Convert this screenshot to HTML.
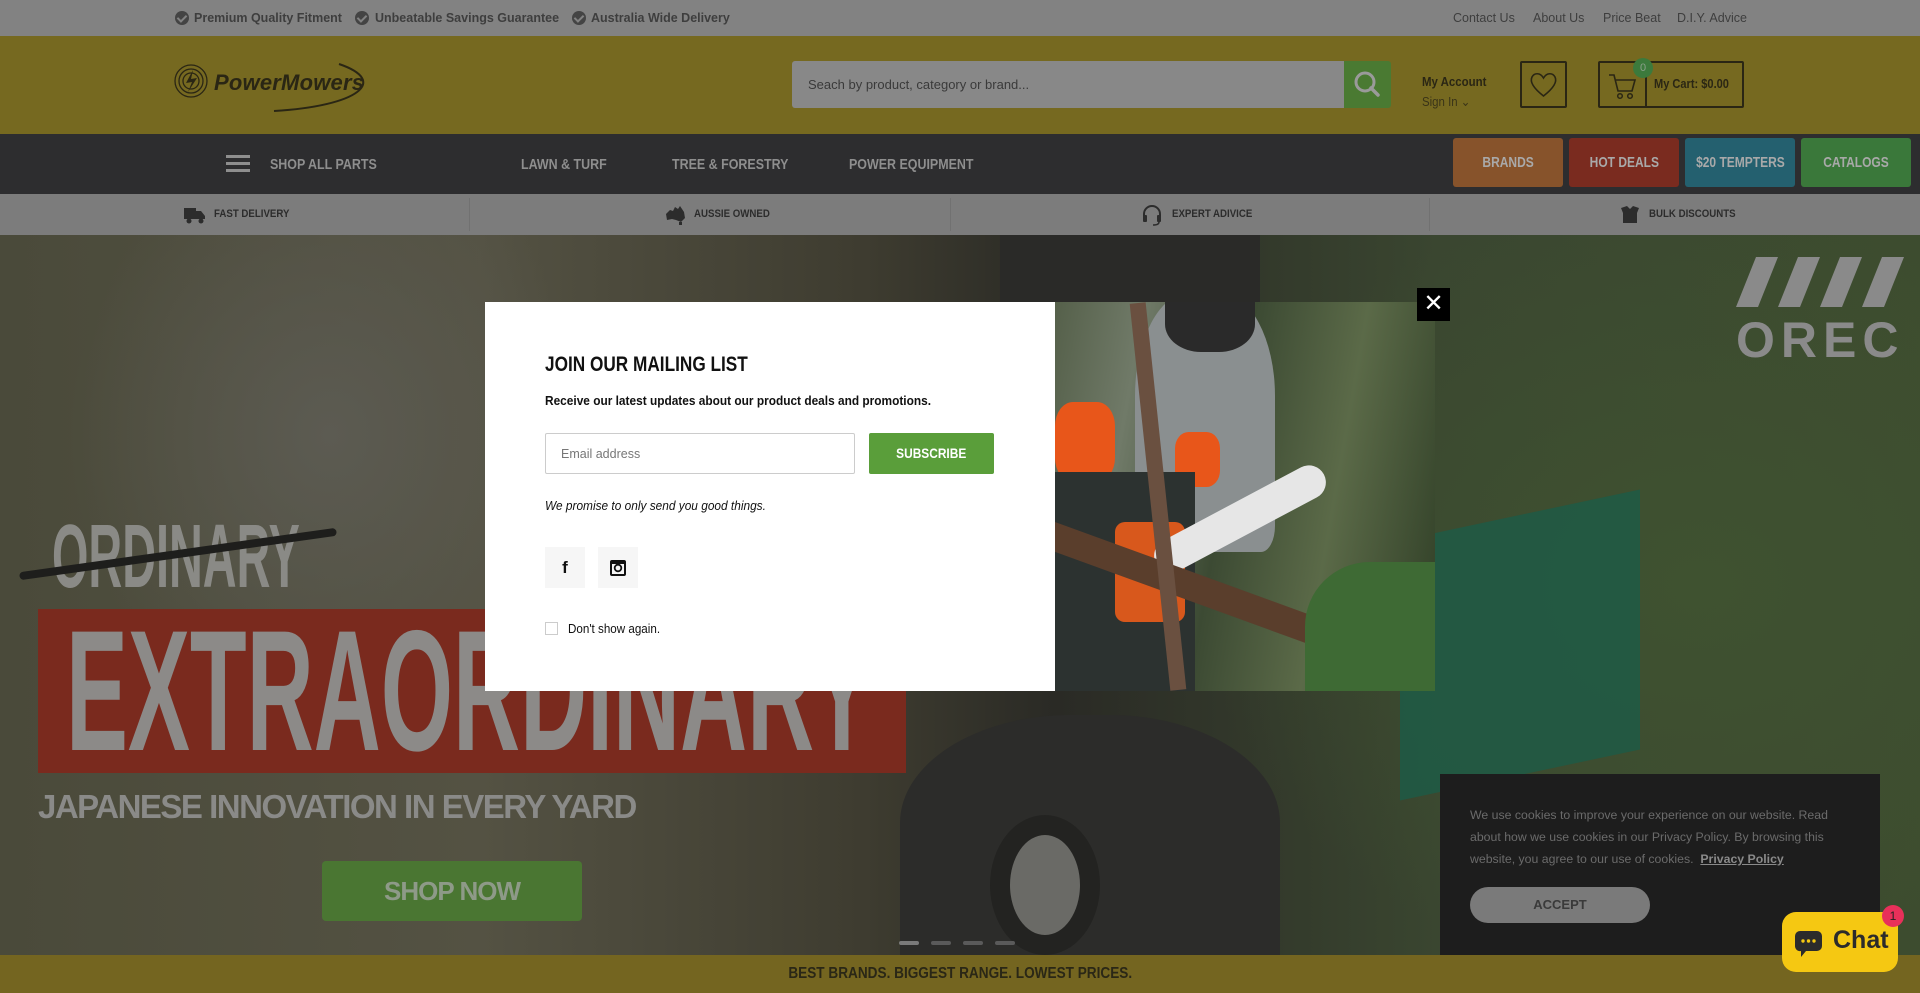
<!DOCTYPE html>
<html><head><meta charset="utf-8">
<style>
*{margin:0;padding:0;box-sizing:border-box}
body{width:1920px;height:993px;overflow:hidden;position:relative;font-family:"Liberation Sans",sans-serif;background:#3b3a2c}
.abs{position:absolute}
.c{transform-origin:left center;white-space:nowrap}
#top{left:0;top:0;width:1920px;height:36px;background:#828282;color:#3e3e3e;font-size:12.5px}
#top span{position:absolute;top:11px;white-space:nowrap}
.chk{position:absolute;top:11px;width:14px;height:14px;border-radius:50%;background:#444}
.chk:after{content:"";position:absolute;left:4px;top:2px;width:4px;height:7px;border:solid #828282;border-width:0 2px 2px 0;transform:rotate(45deg)}
#hdr{left:0;top:36px;width:1920px;height:98px;background:#766920}
#nav{left:0;top:134px;width:1920px;height:60px;background:#2d2d2f}
#nav .t{position:absolute;top:22px;color:#8e8e8e;font-weight:bold;font-size:15px;transform:scaleX(.83)}
.btn{position:absolute;top:138px;height:49px;width:110px;border-radius:3px;color:#a9a9a9;font-weight:bold;font-size:15px;text-align:center;line-height:49px;white-space:nowrap;overflow:hidden}
.btn i{font-style:normal;display:inline-block;transform:scaleX(.8)}
#feat{left:0;top:194px;width:1920px;height:41px;background:#7c7c7c;color:#2c2c2c;font-size:11px;font-weight:bold}
#feat span{position:absolute;top:14px;transform:scaleX(.88)}
.div{position:absolute;top:4px;width:1px;height:33px;background:#717171}
#hero{left:0;top:235px;width:1920px;height:720px;overflow:hidden;
background:
radial-gradient(ellipse 260px 300px at 330px 200px,#5c5b52 0%,rgba(70,70,60,0) 100%),
radial-gradient(ellipse 500px 400px at 1700px 350px,#3f5230 0%,rgba(60,80,45,0) 100%),
linear-gradient(90deg,#4a4a3a 0%,#545243 25%,#3e3c30 45%,#2a2a25 55%,#3a4630 75%,#3d4c2f 100%)}
#bot{left:0;top:955px;width:1920px;height:38px;background:#746520;color:#2a2716;font-weight:bold;font-size:16px;text-align:center;line-height:38px}
#modal{left:485px;top:302px;width:570px;height:389px;background:#fff}
#img{left:1055px;top:302px;width:380px;height:389px;overflow:hidden;
background:linear-gradient(100deg,#55604a 0%,#707a68 20%,#3c4a33 45%,#5b6a48 70%,#2f3e26 100%)}
#cookie{left:1440px;top:774px;width:440px;height:181px;background:#1d1d1d;color:#6b6b6b;font-size:12.3px;line-height:22px}
</style></head><body>

<div id="top" class="abs">
 <div class="chk" style="left:175px"></div><span style="left:194px;font-weight:bold">Premium Quality Fitment</span>
 <div class="chk" style="left:355px"></div><span style="left:375px;font-weight:bold">Unbeatable Savings Guarantee</span>
 <div class="chk" style="left:572px"></div><span style="left:591px;font-weight:bold">Australia Wide Delivery</span>
 <span style="left:1453px">Contact Us</span><span style="left:1533px">About Us</span><span style="left:1603px">Price Beat</span><span style="left:1677px">D.I.Y. Advice</span>
</div>

<div id="hdr" class="abs">
 <svg class="abs" style="left:174px;top:25px" width="210" height="52" viewBox="0 0 210 52">
  <g fill="none" stroke="#2a2614" stroke-width="1.3"><circle cx="17" cy="20" r="16"/><circle cx="17" cy="20" r="12"/><circle cx="17" cy="20" r="8"/></g>
  <path d="M19 9 L12 22 L18 21 L14 31 L23 17 L17 18 Z" fill="#2a2614"/>
  <text x="40" y="29" font-family="Liberation Sans" font-weight="bold" font-style="italic" font-size="22" fill="#2a2614" textLength="150">PowerMowers</text>
  <path d="M165 3 C215 20 185 45 100 50" fill="none" stroke="#2a2614" stroke-width="2"/>
 </svg>
 <div class="abs" style="left:792px;top:25px;width:552px;height:47px;background:#888;border-radius:3px 0 0 3px;color:#3a3a3a;font-size:13px;line-height:47px;padding-left:16px">Seach by product, category or brand...</div>
 <div class="abs" style="left:1344px;top:25px;width:47px;height:47px;background:#4a7a32;border-radius:0 3px 3px 0">
  <svg width="47" height="47"><circle cx="21" cy="21" r="9" fill="none" stroke="#9a9a9a" stroke-width="3"/><path d="M27 27 L34 34" stroke="#9a9a9a" stroke-width="3.5" stroke-linecap="round"/></svg></div>
 <div class="abs c" style="left:1422px;top:38px;font-size:13px;font-weight:bold;color:#2a2614;transform:scaleX(.88)">My Account</div>
 <div class="abs c" style="left:1422px;top:58px;font-size:13px;color:#3a3418;transform:scaleX(.88)">Sign In ⌄</div>
 <div class="abs" style="left:1520px;top:25px;width:47px;height:47px;border:2px solid #2a2614;border-radius:2px">
  <svg width="43" height="43"><path d="M21.5 33 C10 24 8 18 10 14 C12 10 18 9 21.5 15 C25 9 31 10 33 14 C35 18 33 24 21.5 33Z" fill="none" stroke="#2a2614" stroke-width="1.6"/></svg></div>
 <div class="abs" style="left:1598px;top:25px;width:146px;height:47px;border:2px solid #2a2614;border-radius:2px">
  <div class="abs" style="left:45px;top:-2px;width:2px;height:47px;background:#2a2614"></div>
  <svg class="abs" style="left:6px;top:8px" width="34" height="30"><path d="M3 4 H8 L12 20 H26 L29 9 H10" fill="none" stroke="#2a2614" stroke-width="1.6"/><circle cx="14" cy="25" r="2.3" fill="none" stroke="#2a2614" stroke-width="1.5"/><circle cx="24" cy="25" r="2.3" fill="none" stroke="#2a2614" stroke-width="1.5"/></svg>
  <div class="abs c" style="left:54px;top:13px;font-size:13px;font-weight:bold;color:#2a2614;transform:scaleX(.85)">My Cart: $0.00</div>
 </div>
 <div class="abs" style="left:1633px;top:22px;width:20px;height:20px;border-radius:50%;background:#3c7a3c;color:#8aa08a;font-size:11px;text-align:center;line-height:20px">0</div>
</div>

<div id="nav" class="abs">
 <div class="abs" style="left:226px;top:21px;width:24px;height:3px;background:#8e8e8e;box-shadow:0 7px 0 #8e8e8e,0 14px 0 #8e8e8e"></div>
 <div class="t c" style="left:270px">SHOP ALL PARTS</div>
 <div class="t c" style="left:521px">LAWN &amp; TURF</div>
 <div class="t c" style="left:672px">TREE &amp; FORESTRY</div>
 <div class="t c" style="left:849px">POWER EQUIPMENT</div>
</div>
<div class="btn" style="left:1453px;background:#87532b"><i>BRANDS</i></div>
<div class="btn" style="left:1569px;background:#7a2b1f"><i>HOT DEALS</i></div>
<div class="btn" style="left:1685px;background:#24606f"><i style="margin-left:-20px;margin-right:-20px">$20 TEMPTERS</i></div>
<div class="btn" style="left:1801px;background:#3a783a"><i>CATALOGS</i></div>

<div id="feat" class="abs">
 <div class="div" style="left:469px"></div><div class="div" style="left:950px"></div><div class="div" style="left:1429px"></div>
 <svg class="abs" style="left:184px;top:12px" width="22" height="18"><rect x="0" y="2" width="12" height="11" fill="#2c2c2c"/><path d="M12 5 H17 L21 10 V13 H12Z" fill="#2c2c2c"/><circle cx="5" cy="15" r="2.5" fill="#2c2c2c"/><circle cx="17" cy="15" r="2.5" fill="#2c2c2c"/></svg>
 <span class="c" style="left:214px">FAST DELIVERY</span>
 <svg class="abs" style="left:664px;top:11px" width="22" height="20"><path d="M2 9 L6 5 L9 6 L11 2 L14 4 L16 1 L20 7 L21 13 L17 17 L12 15 L8 14 L3 15 Z" fill="#2c2c2c"/><rect x="15" y="17" width="3" height="3" fill="#2c2c2c"/></svg>
 <span class="c" style="left:694px">AUSSIE OWNED</span>
 <svg class="abs" style="left:1141px;top:10px" width="22" height="22"><path d="M3 13 V10 A8 8 0 0 1 19 10 V13" fill="none" stroke="#2c2c2c" stroke-width="2"/><rect x="2" y="11" width="4" height="7" rx="1" fill="#2c2c2c"/><rect x="16" y="11" width="4" height="7" rx="1" fill="#2c2c2c"/><path d="M18 18 Q18 21 12 21" fill="none" stroke="#2c2c2c" stroke-width="1.5"/></svg>
 <span class="c" style="left:1172px">EXPERT ADIVICE</span>
 <svg class="abs" style="left:1620px;top:11px" width="20" height="20"><path d="M1 3 L7 1 L10 4 L13 1 L19 3 L17 8 V18 H3 V8 Z" fill="#2c2c2c"/></svg>
 <span class="c" style="left:1649px">BULK DISCOUNTS</span>
</div>

<div id="hero" class="abs">
 <div class="abs" style="left:1000px;top:0;width:260px;height:120px;background:#2a2a28;border-radius:0 0 40% 40%"></div>
 <div class="abs" style="left:1400px;top:280px;width:240px;height:260px;background:#1f5a45;transform:skewY(-12deg);opacity:.85"></div>
 <div class="abs" style="left:900px;top:480px;width:380px;height:240px;background:#2c2c2a;border-radius:45% 45% 0 0"></div>
 <div class="abs" style="left:990px;top:580px;width:110px;height:140px;border-radius:50%;background:#6a6a66;border:20px solid #232321"></div>
 <svg class="abs" style="left:1736px;top:22px" width="180" height="102"><g fill="#8a8a8a"><path d="M20 0 H42 L22 50 H0Z"/><path d="M62 0 H84 L64 50 H42Z"/><path d="M104 0 H126 L106 50 H84Z"/><path d="M146 0 H168 L148 50 H126Z"/></g><text x="0" y="100" font-family="Liberation Sans" font-weight="bold" font-size="50" letter-spacing="6" fill="#8a8a8a">OREC</text></svg>
 <div class="abs c" style="left:52px;top:277px;font-size:90px;font-weight:bold;color:#8a8a86;line-height:90px;transform:scaleX(.52)">ORDINARY</div>
 <div class="abs" style="left:18px;top:315px;width:320px;height:8px;background:#1e1e1c;transform:rotate(-8deg);border-radius:4px"></div>
 <div class="abs" style="left:38px;top:374px;width:868px;height:164px;background:#7a2a1e"></div>
 <div class="abs c" style="left:66px;top:370px;font-size:172px;font-weight:bold;color:#8c8a88;line-height:172px;transform:scaleX(.54)">EXTRAORDINARY</div>
 <div class="abs c" style="left:38px;top:553px;font-size:33px;font-weight:bold;color:#8a8a88;letter-spacing:-1.5px">JAPANESE INNOVATION IN EVERY YARD</div>
 <div class="abs" style="left:322px;top:626px;width:260px;height:60px;background:#4a7632;border-radius:4px;color:#8e9a88;font-weight:bold;font-size:26px;text-align:center;line-height:60px;letter-spacing:-1px">SHOP NOW</div>
 <div class="abs" style="left:899px;top:706px;width:20px;height:4px;background:#7a7a7a;border-radius:2px;box-shadow:32px 0 0 #5a5a5a,64px 0 0 #5a5a5a,96px 0 0 #5a5a5a"></div>
</div>

<div id="bot" class="abs"><span style="display:inline-block;transform:scaleX(.85)">BEST BRANDS. BIGGEST RANGE. LOWEST PRICES.</span></div>

<div id="modal" class="abs">
 <div class="abs c" style="left:60px;top:51px;font-size:21px;font-weight:bold;color:#111;transform:scaleX(.82)">JOIN OUR MAILING LIST</div>
 <div class="abs c" style="left:60px;top:92px;font-size:12.5px;font-weight:bold;color:#111;transform:scaleX(.95)">Receive our latest updates about our product deals and promotions.</div>
 <div class="abs" style="left:60px;top:131px;width:310px;height:41px;border:1px solid #ccc;border-radius:2px;font-size:12.5px;color:#777;line-height:40px;padding-left:15px">Email address</div>
 <div class="abs" style="left:384px;top:131px;width:125px;height:41px;background:#5a9e3a;border-radius:2px;color:#fff;font-weight:bold;font-size:14px;text-align:center;line-height:41px"><span style="display:inline-block;transform:scaleX(.85)">SUBSCRIBE</span></div>
 <div class="abs c" style="left:60px;top:197px;font-size:12.5px;font-style:italic;color:#111;transform:scaleX(.95)">We promise to only send you good things.</div>
 <div class="abs" style="left:60px;top:245px;width:40px;height:41px;background:#f6f6f6;color:#111;font-weight:bold;font-size:17px;text-align:center;line-height:41px">f</div>
 <div class="abs" style="left:113px;top:245px;width:40px;height:41px;background:#f6f6f6">
  <svg width="40" height="41"><rect x="13" y="14" width="14" height="14" rx="1" fill="none" stroke="#111" stroke-width="2"/><circle cx="20" cy="21" r="3.3" fill="none" stroke="#111" stroke-width="1.8"/><rect x="13" y="14" width="14" height="3" fill="#111"/></svg></div>
 <div class="abs" style="left:60px;top:320px;width:13px;height:13px;border:1px solid #ccc"></div>
 <div class="abs c" style="left:83px;top:320px;font-size:12.5px;color:#111;transform:scaleX(.93)">Don't show again.</div>
</div>

<div id="img" class="abs">
 <div class="abs" style="left:80px;top:-10px;width:140px;height:260px;background:#8a8f90;border-radius:40% 40% 10% 10%"></div>
 <div class="abs" style="left:110px;top:-20px;width:90px;height:70px;background:#2a2a2a;border-radius:0 0 40% 40%"></div>
 <div class="abs" style="left:0;top:100px;width:60px;height:80px;background:#e8561a;border-radius:30%"></div>
 <div class="abs" style="left:120px;top:130px;width:45px;height:55px;background:#e8561a;border-radius:30%"></div>
 <div class="abs" style="left:0;top:170px;width:140px;height:220px;background:#2c3230"></div>
 <div class="abs" style="left:60px;top:220px;width:70px;height:100px;background:#d8581c;border-radius:10px"></div>
 <div class="abs" style="left:90px;top:200px;width:190px;height:34px;background:#e6e6e6;border-radius:17px;transform:rotate(-28deg)"></div>
 <div class="abs" style="left:-30px;top:210px;width:460px;height:28px;background:#5a3e2c;transform:rotate(20deg);transform-origin:left"></div>
 <div class="abs" style="left:95px;top:0;width:16px;height:389px;background:#6a5040;transform:rotate(-6deg)"></div>
 <div class="abs" style="left:250px;top:260px;width:130px;height:129px;background:#3e6a34;border-radius:50% 0 0 0"></div>
</div>
<div class="abs" style="left:1417px;top:288px;width:33px;height:33px;background:#000;color:#fff;font-size:24px;text-align:center;line-height:32px">✕</div>

<div id="cookie" class="abs">
 <div class="abs" style="left:30px;top:30px;width:390px">We use cookies to improve your experience on our website. Read about how we use cookies in our Privacy Policy. By browsing this website, you agree to our use of cookies. &nbsp;<b style="color:#8a8a8a;text-decoration:underline">Privacy Policy</b></div>
 <div class="abs" style="left:30px;top:113px;width:180px;height:36px;border-radius:18px;background:#7a7a7a;color:#3a3a3a;font-weight:bold;font-size:13px;text-align:center;line-height:36px">ACCEPT</div>
</div>

<div class="abs" style="left:1782px;top:912px;width:116px;height:60px;background:#f5c812;border-radius:14px">
 <svg class="abs" style="left:12px;top:17px" width="30" height="30"><path d="M6 2 H23 A5 5 0 0 1 28 7 V17 A5 5 0 0 1 23 22 H12 L7 28 V22 A5 5 0 0 1 1 17 V7 A5 5 0 0 1 6 2Z" fill="#2b2b2b"/><circle cx="9" cy="12" r="1.7" fill="#f5c812"/><circle cx="14.5" cy="12" r="1.7" fill="#f5c812"/><circle cx="20" cy="12" r="1.7" fill="#f5c812"/></svg>
 <div class="abs" style="left:51px;top:14px;font-size:25px;font-weight:bold;color:#2b2b2b">Chat</div>
</div>
<div class="abs" style="left:1882px;top:905px;width:22px;height:22px;border-radius:50%;background:#e8305a;color:#222;font-size:12px;text-align:center;line-height:22px">1</div>
</body></html>
